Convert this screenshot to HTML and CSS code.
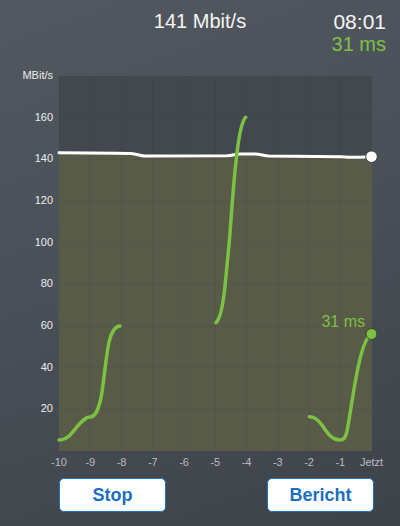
FILE: index.html
```html
<!DOCTYPE html>
<html lang="de">
<head>
<meta charset="utf-8">
<title>Speed</title>
<link rel="stylesheet" href="styles.css">
</head>
<body>
<div class="screen">
  <header class="top">
    <div class="speed">141 Mbit/s</div>
    <div class="right">
      <div class="time">08:01</div>
      <div class="ping">31 ms</div>
    </div>
  </header>

  <div class="chart-row">
    <div class="yaxis">
      <span>MBit/s</span>
      <span>160</span>
      <span>140</span>
      <span>120</span>
      <span>100</span>
      <span>80</span>
      <span>60</span>
      <span>40</span>
      <span>20</span>
    </div>
    <svg class="plot" width="313" height="375" viewBox="0 0 313 375">
      <rect class="bg" x="0" y="0" width="313" height="375"/>
      <path class="fill" d="M0,76.8 C30,77 60,76.8 72,77.4 C78,77.8 80,79.6 86,80 L168,79.8 C174,79.6 176,78 181,78 L196,78 C202,78 204,79.8 210,80 L282,80.8 C292,81.4 298,81.6 306,81 L313,80.7 L313,375 L0,375 Z"/>
      <g class="grid">
        <line x1="31.25" y1="0" x2="31.25" y2="375"/>
        <line x1="62.5" y1="0" x2="62.5" y2="375"/>
        <line x1="93.75" y1="0" x2="93.75" y2="375"/>
        <line x1="125" y1="0" x2="125" y2="375"/>
        <line x1="156.25" y1="0" x2="156.25" y2="375"/>
        <line x1="187.5" y1="0" x2="187.5" y2="375"/>
        <line x1="218.75" y1="0" x2="218.75" y2="375"/>
        <line x1="250" y1="0" x2="250" y2="375"/>
        <line x1="281.25" y1="0" x2="281.25" y2="375"/>
        <line x1="0" y1="41.67" x2="313" y2="41.67"/>
        <line x1="0" y1="83.33" x2="313" y2="83.33"/>
        <line x1="0" y1="125" x2="313" y2="125"/>
        <line x1="0" y1="166.67" x2="313" y2="166.67"/>
        <line x1="0" y1="208.33" x2="313" y2="208.33"/>
        <line x1="0" y1="250" x2="313" y2="250"/>
        <line x1="0" y1="291.67" x2="313" y2="291.67"/>
        <line x1="0" y1="333.33" x2="313" y2="333.33"/>
      </g>
      <path class="speedline" d="M0,76.8 C30,77 60,76.8 72,77.4 C78,77.8 80,79.6 86,80 L168,79.8 C174,79.6 176,78 181,78 L196,78 C202,78 204,79.8 210,80 L282,80.8 C292,81.4 298,81.6 306,81 L312.5,80.7"/>
      <path class="ping-line" d="M0,364 C8,364 12,358 17,352 C22,346 26,341 31,341 C36,341 39,335 42,322 C45,305 47,280 50,266 C53,254 57,250 61,250"/>
      <path class="ping-line" d="M157,246.7 C161,243 164,230 166,210 C168,190 170,170 171,157 C173,130 175,100 178,77 C180,60 183,45 186.7,41.3"/>
      <path class="ping-line" d="M250.3,340.7 C256,341 259,344 263,349 C268,356 272,364 281,364 C285,364 287,362 289,350 C291,338 294,318 297,302 C300,285 305,262 312.5,258"/>
      <text class="ping-label" x="306" y="250.5">31 ms</text>
      <circle class="dot-white" cx="312.5" cy="80.7" r="5.8"/>
      <circle class="dot-green" cx="312.5" cy="258" r="5.5"/>
    </svg>
  </div>

  <div class="xaxis">
    <span>-10</span><span>-9</span><span>-8</span><span>-7</span><span>-6</span><span>-5</span><span>-4</span><span>-3</span><span>-2</span><span>-1</span><span>Jetzt</span>
  </div>

  <div class="buttons">
    <button class="btn">Stop</button>
    <button class="btn">Bericht</button>
  </div>
</div>
</body>
</html>
```

FILE: styles.css
```css
html, body {
  margin: 0;
  padding: 0;
  width: 400px;
  height: 526px;
  overflow: hidden;
}
body {
  font-family: "Liberation Sans", Arial, sans-serif;
  background: linear-gradient(160deg, #525860 0%, #4a5058 45%, #3e4249 100%);
  color: #ffffff;
}
.screen {
  width: 400px;
  height: 526px;
  display: flex;
  flex-direction: column;
}
.top {
  display: grid;
  grid-template-columns: 1fr auto 1fr;
  padding-top: 10px;
  height: 76px;
  box-sizing: border-box;
  flex: none;
}
.speed {
  grid-column: 2;
  font-size: 20px;
  line-height: 23px;
  color: #f4f4f4;
}
.right {
  grid-column: 3;
  text-align: right;
  font-size: 20px;
  line-height: 23px;
  padding-right: 14px;
}
.time {
  color: #f6f6f6;
  font-size: 21px;
}
.ping {
  color: #7dc143;
}
.chart-row {
  display: flex;
  align-items: flex-start;
  gap: 6px;
  flex: none;
}
.yaxis {
  width: 53px;
  margin-top: -20.83px;
  display: flex;
  flex-direction: column;
  text-align: right;
  font-size: 11px;
  color: #ececec;
}
.yaxis span {
  height: 41.667px;
  line-height: 41.667px;
}
.plot {
  display: block;
  overflow: visible;
}
.plot .bg { fill: #43484f; }
.plot .fill { fill: #585b48; }
.plot .grid line {
  stroke: rgba(0, 0, 0, 0.05);
  stroke-width: 1;
}
.plot .speedline {
  fill: none;
  stroke: #ffffff;
  stroke-width: 3;
  stroke-linecap: round;
}
.plot .ping-line {
  fill: none;
  stroke: #7cc242;
  stroke-width: 3.5;
  stroke-linecap: round;
}
.plot .ping-label {
  fill: #7dc143;
  font-family: "Liberation Sans", Arial, sans-serif;
  font-size: 16px;
  text-anchor: end;
}
.plot .dot-white {
  fill: #ffffff;
  stroke: #3a3e44;
  stroke-width: 1;
}
.plot .dot-green {
  fill: #7cc242;
  stroke: #34402a;
  stroke-width: 1;
}
.xaxis {
  display: grid;
  grid-template-columns: repeat(11, 31.25px);
  padding-left: 43.4px;
  height: 22px;
  line-height: 22px;
  font-size: 11px;
  color: #b8bcc1;
  text-align: center;
  flex: none;
}
.xaxis span {
  white-space: nowrap;
  display: flex;
  justify-content: center;
}
.buttons {
  display: flex;
  justify-content: space-between;
  margin: 5px 26px 0 59px;
  flex: none;
}
.btn {
  width: 107px;
  height: 34px;
  background: #ffffff;
  border: 1px solid #1f74c9;
  border-radius: 5px;
  font-family: "Liberation Sans", Arial, sans-serif;
  font-weight: bold;
  font-size: 18px;
  color: #1a6fc0;
  padding: 0;
  cursor: pointer;
}
```
